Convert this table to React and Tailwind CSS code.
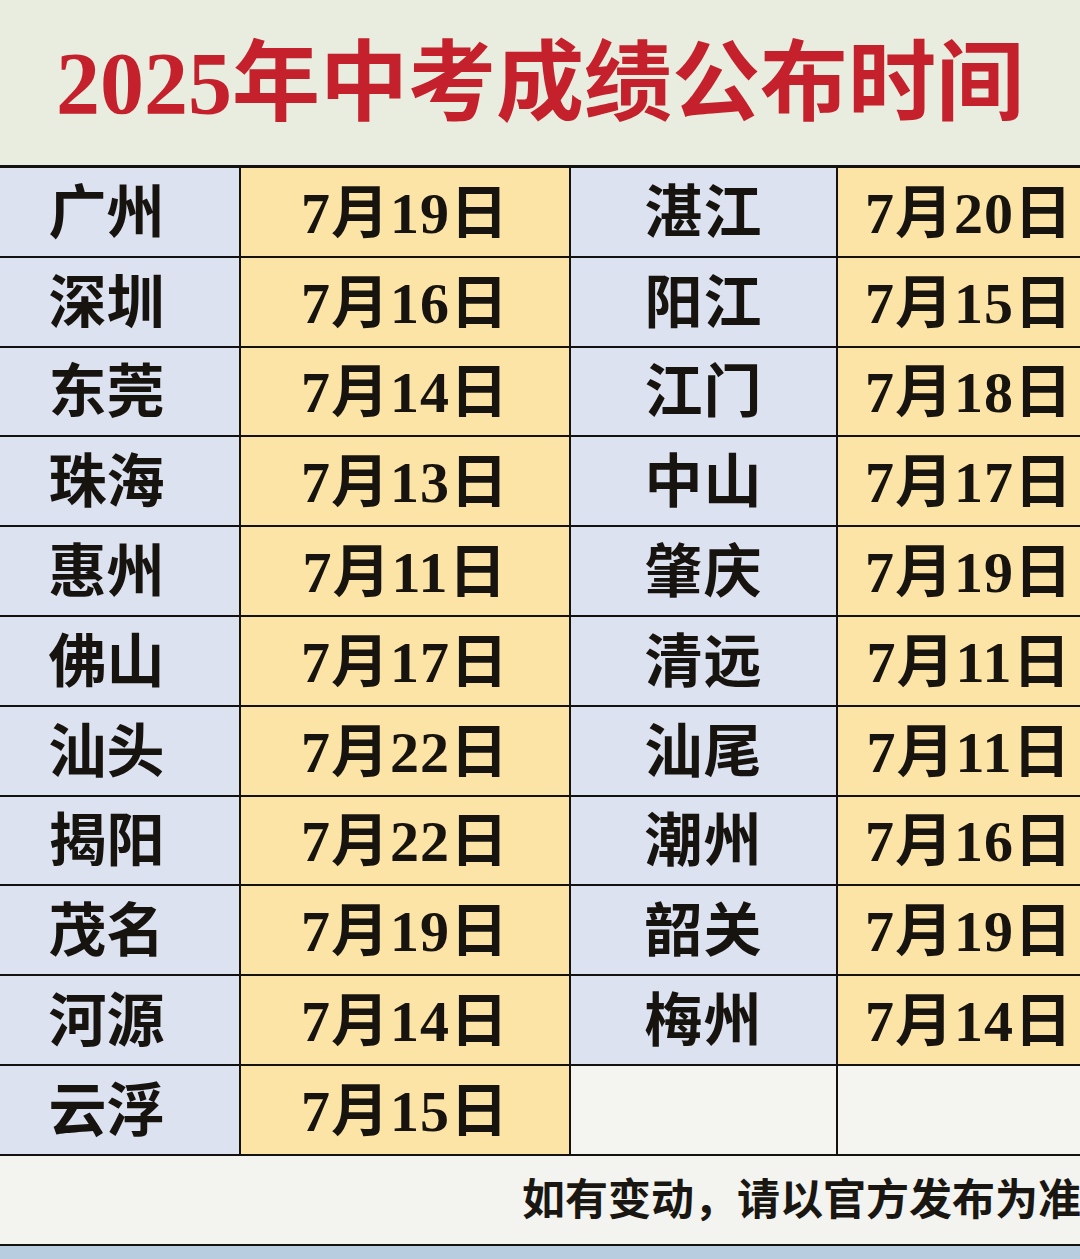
import React from 'react';

const ROWS = [
  ['广州', '7月19日', '湛江', '7月20日'],
  ['深圳', '7月16日', '阳江', '7月15日'],
  ['东莞', '7月14日', '江门', '7月18日'],
  ['珠海', '7月13日', '中山', '7月17日'],
  ['惠州', '7月11日', '肇庆', '7月19日'],
  ['佛山', '7月17日', '清远', '7月11日'],
  ['汕头', '7月22日', '汕尾', '7月11日'],
  ['揭阳', '7月22日', '潮州', '7月16日'],
  ['茂名', '7月19日', '韶关', '7月19日'],
  ['河源', '7月14日', '梅州', '7月14日'],
  ['云浮', '7月15日', '', ''],
];

const FONT = { fontFamily: '"Liberation Serif", "Noto Sans CJK SC", serif' };

function Cell({ text, kind, last }) {
  const bg = text === '' ? 'bg-[#f4f4f1]' : kind === 'city' ? 'bg-[#dce2ef]' : 'bg-[#fce4a6]';
  return (
    <div
      className={`h-[89.8px] pt-[4px] flex items-center justify-center border-b-2 border-[#141210] ${last ? '' : 'border-r-2'} ${bg}`}
    >
      <span className="text-[58px] font-bold text-[#17130f] leading-none tracking-[1px]">{text}</span>
    </div>
  );
}

export default function App() {
  return (
    <div className="w-[1080px] h-[1259px] overflow-hidden bg-[#eef0ea]" style={FONT}>
      {/* title */}
      <div className="h-[165px] bg-[#e8eddf] flex items-center justify-center pt-[2px]">
        <h1 className="text-[88px] font-bold text-[#c4212c] leading-none">2025年中考成绩公布时间</h1>
      </div>

      {/* table */}
      <div className="w-[1100px] border-t-[3px] border-[#141210] grid grid-cols-[241px_330px_267px_262px]">
        {ROWS.map((r, i) => (
          <React.Fragment key={i}>
            <div className="pr-[26px] pt-[4px] h-[89.8px] flex items-center justify-center border-b-2 border-r-2 border-[#141210] bg-[#dce2ef]">
              <span className="text-[58px] font-bold text-[#17130f] leading-none">{r[0]}</span>
            </div>
            <Cell text={r[1]} kind="date" />
            <Cell text={r[2]} kind="city" />
            <Cell text={r[3]} kind="date" last />
          </React.Fragment>
        ))}
      </div>

      {/* note */}
      <div className="h-[90px] bg-[#f3f3f0] border-b-2 border-[#141210] flex items-center pl-[522px] pt-[2px] whitespace-nowrap">
        <span className="text-[43px] font-bold text-[#1a1712] leading-none">如有变动，请以官方发布为准</span>
      </div>
      <div className="h-[20px] bg-[#b9cde0]" />
    </div>
  );
}
